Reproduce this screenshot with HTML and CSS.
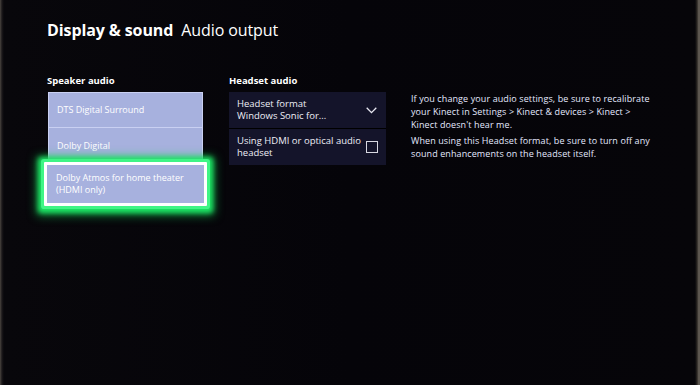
FILE: index.html
```html
<!DOCTYPE html>
<html lang="en">
<head>
<meta charset="utf-8">
<title>Display &amp; sound - Audio output</title>
<link rel="stylesheet" href="styles.css">
</head>
<body>
<div class="screen">
  <h1 class="title"><b>Display &amp; sound</b><span>Audio output</span></h1>
  <div class="columns">
    <section class="col-speaker">
      <h2 class="label">Speaker audio</h2>
      <ul class="options">
        <li class="option">DTS Digital Surround</li>
        <li class="option">Dolby Digital</li>
        <li class="option focused">Dolby Atmos for home theater<br>(HDMI only)</li>
      </ul>
    </section>
    <section class="col-headset">
      <h2 class="label">Headset audio</h2>
      <div class="panel">
        <div class="row">
          <div class="row-text">Headset format<br>Windows Sonic for...</div>
          <svg class="chevron" width="11" height="7" viewBox="0 0 11 7"><path d="M0.7 0.8 L5.5 5.6 L10.3 0.8" fill="none" stroke="#e8e8f2" stroke-width="1.3"/></svg>
        </div>
        <div class="row">
          <div class="row-text">Using HDMI or optical audio<br>headset</div>
          <span class="checkbox"></span>
        </div>
      </div>
    </section>
    <section class="info">
      <p>If you change your audio settings, be sure to recalibrate your Kinect in Settings &gt; Kinect &amp; devices &gt; Kinect &gt; Kinect doesn't hear me.</p>
      <p>When using this Headset format, be sure to turn off any sound enhancements on the headset itself.</p>
    </section>
  </div>
</div>
</body>
</html>
```
FILE: styles.css
```css
html, body {
  margin: 0;
  padding: 0;
}
body {
  width: 700px;
  height: 385px;
  overflow: hidden;
  background: linear-gradient(to right, #4a4540 0, #1a1719 2px, #08070b 4px, #050409 50%, #060509 695px, #2a2622 697px, #6a645c 699px, #504a44 700px);
  font-family: "Open Sans", "Noto Sans", sans-serif;
  color: #ffffff;
}
.screen {
  padding: 18px 0 0 47px;
}
.title {
  margin: 0;
  font-size: 16px;
  line-height: 24px;
  font-weight: 400;
  letter-spacing: -0.1px;
}
.title b {
  font-weight: 700;
}
.title span {
  margin-left: 8px;
}
.columns {
  display: flex;
  margin-top: 33px;
}
.label {
  margin: 0 0 5px 0;
  font-size: 9.5px;
  line-height: 12px;
  font-weight: 700;
}
.col-speaker {
  width: 160px;
}
.options {
  list-style: none;
  margin: 0 0 0 1px;
  padding: 0;
  width: 155px;
}
.option {
  box-sizing: border-box;
  height: 36px;
  display: flex;
  align-items: center;
  padding: 0 8px;
  background: #a7b1de;
  border: 1px solid #c9d0f2;
  font-size: 9px;
  line-height: 12px;
  color: #ffffff;
}
.option + .option {
  border-top: none;
}
.option.focused {
  position: relative;
  height: 44px;
  margin: -2px -4px 0 -4px;
  padding: 0 9px;
  border: 3px solid #ffffff;
  box-shadow: 0 0 0 3px #3ff585, 0 1px 5px 6px #1de565, 0 2px 10px 8px rgba(20, 200, 80, 0.55);
  border-radius: 1px;
}
.col-headset {
  margin-left: 22px;
  width: 157px;
}
.panel {
  background: #000;
}
.row {
  box-sizing: border-box;
  height: 36px;
  display: flex;
  align-items: center;
  justify-content: space-between;
  padding: 0 8px 0 8px;
  background: #14142a;
  font-size: 9.5px;
  line-height: 12px;
  color: #eeeef6;
}
.row + .row {
  margin-top: 1px;
}
.chevron {
  display: block;
  margin-right: 1px;
}
.checkbox {
  box-sizing: border-box;
  width: 12px;
  height: 12px;
  border: 1.5px solid #d8d8e2;
}
.info {
  margin-left: 25px;
  width: 240px;
  padding-top: 17px;
  font-size: 9px;
  line-height: 13px;
  letter-spacing: 0.1px;
  color: #e4e8ff;
}
.info p {
  margin: 0 0 3px 0;
}
```
